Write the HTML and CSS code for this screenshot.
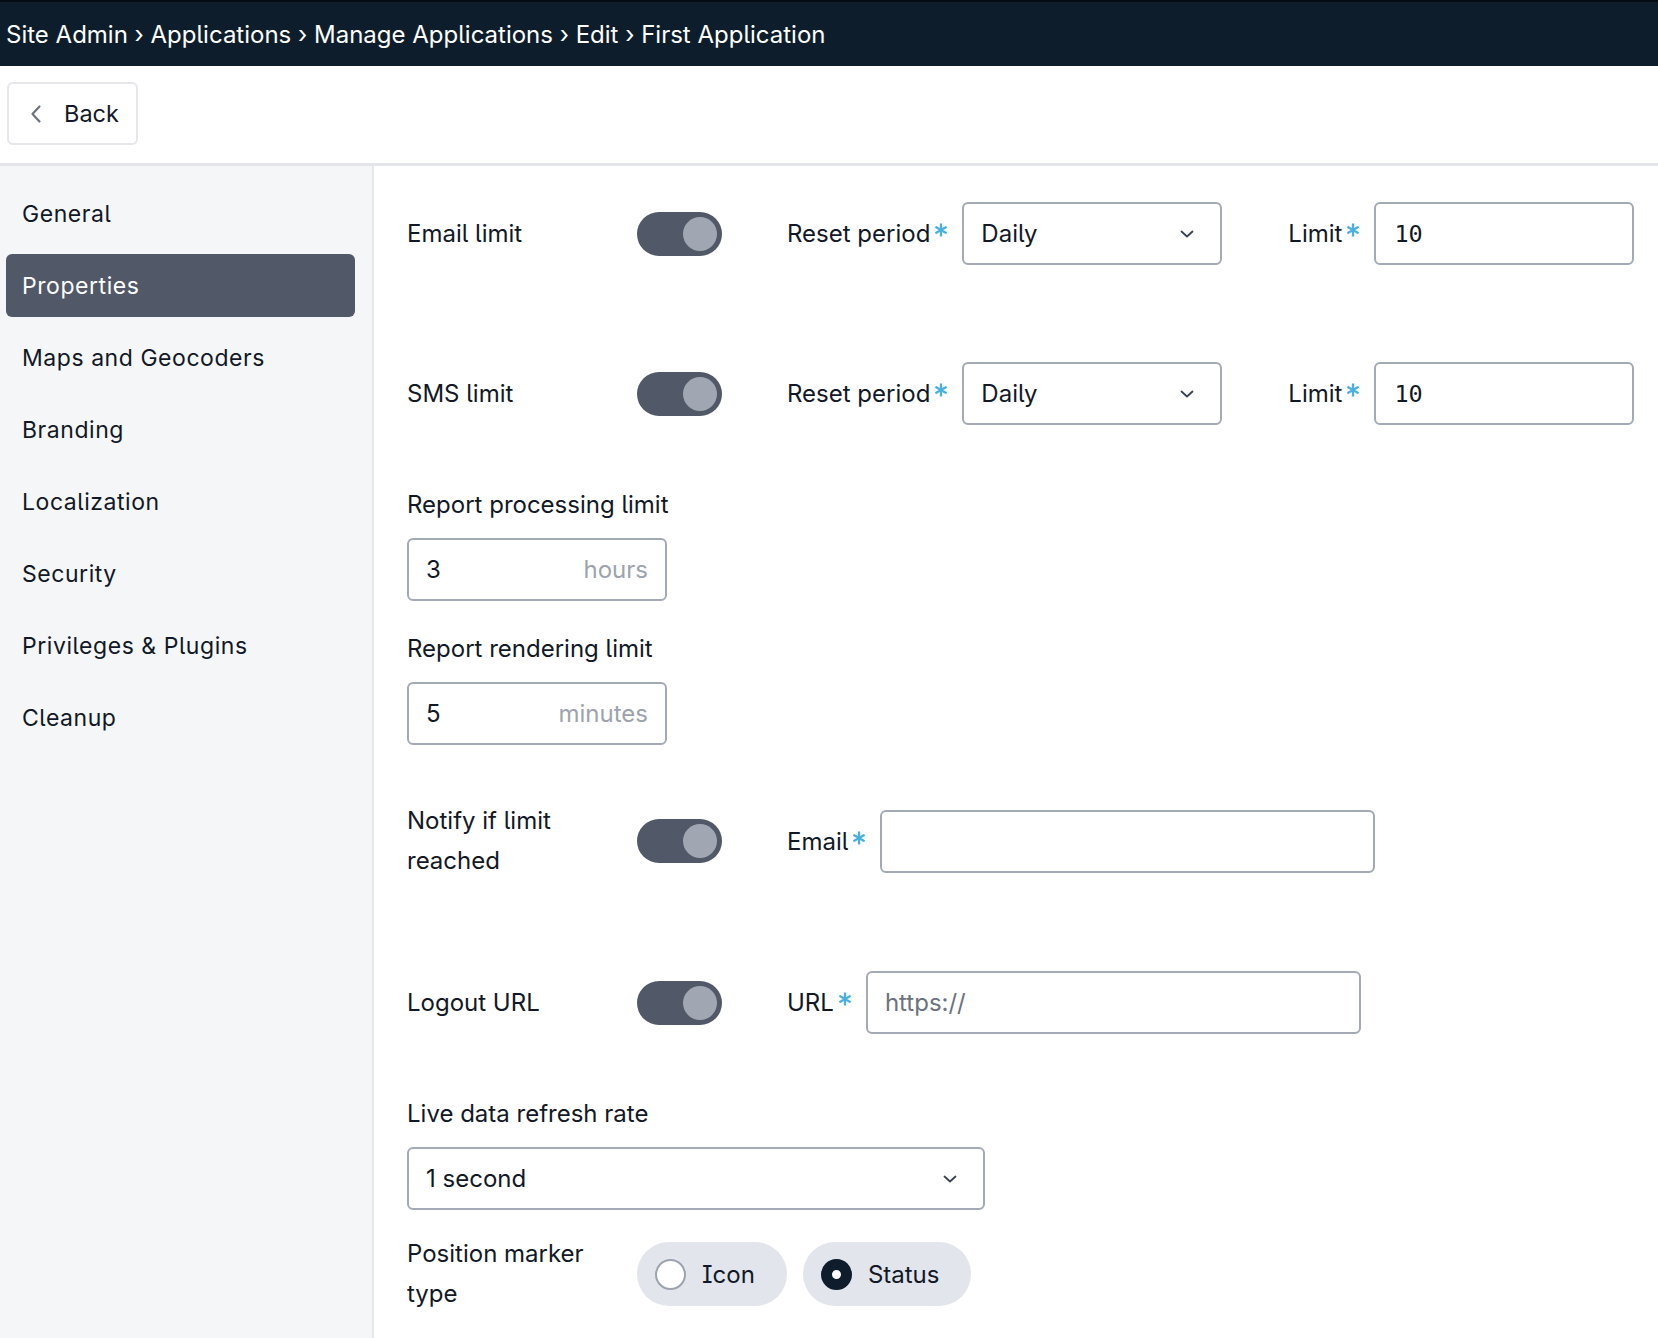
FILE: index.html
```html
<!DOCTYPE html>
<html lang="en">
<head>
<meta charset="utf-8">
<title>Edit Application</title>
<link rel="stylesheet" href="styles.css">
</head>
<body>
<header class="topbar">
  <nav class="crumbs">Site Admin › Applications › Manage Applications › Edit › First Application</nav>
</header>

<div class="toolbar">
  <button class="back-btn" type="button">
    <svg class="back-icon" viewBox="0 0 12 20" width="12" height="20" aria-hidden="true"><path d="M9.5 2.5 2.5 10l7 7.5" fill="none" stroke="currentColor" stroke-width="2.2" stroke-linecap="round" stroke-linejoin="round"/></svg>
    <span>Back</span>
  </button>
</div>

<div class="layout">
  <aside class="sidebar">
    <a class="side-item">General</a>
    <a class="side-item active">Properties</a>
    <a class="side-item">Maps and Geocoders</a>
    <a class="side-item">Branding</a>
    <a class="side-item">Localization</a>
    <a class="side-item">Security</a>
    <a class="side-item">Privileges &amp; Plugins</a>
    <a class="side-item">Cleanup</a>
  </aside>

  <main class="content">
    <div class="row row-limit">
      <div class="row-label">Email limit</div>
      <span class="toggle"><span class="knob"></span></span>
      <label class="field-label">Reset period<svg class="req" viewBox="0 0 14 14" width="14" height="14" aria-hidden="true"><path d="M7 0.5v13M1.4 3.8l11.2 6.4M1.4 10.2l11.2-6.4"/></svg></label>
      <div class="select w-sm"><span>Daily</span><svg class="chev" viewBox="0 0 14 8" width="14" height="8"><path d="M1.5 1.5 7 6.5l5.5-5" fill="none" stroke="currentColor" stroke-width="1.8" stroke-linecap="round" stroke-linejoin="round"/></svg></div>
      <label class="field-label gap-l">Limit<svg class="req" viewBox="0 0 14 14" width="14" height="14" aria-hidden="true"><path d="M7 0.5v13M1.4 3.8l11.2 6.4M1.4 10.2l11.2-6.4"/></svg></label>
      <div class="input w-sm num">10</div>
    </div>

    <div class="row row-limit second">
      <div class="row-label">SMS limit</div>
      <span class="toggle"><span class="knob"></span></span>
      <label class="field-label">Reset period<svg class="req" viewBox="0 0 14 14" width="14" height="14" aria-hidden="true"><path d="M7 0.5v13M1.4 3.8l11.2 6.4M1.4 10.2l11.2-6.4"/></svg></label>
      <div class="select w-sm"><span>Daily</span><svg class="chev" viewBox="0 0 14 8" width="14" height="8"><path d="M1.5 1.5 7 6.5l5.5-5" fill="none" stroke="currentColor" stroke-width="1.8" stroke-linecap="round" stroke-linejoin="round"/></svg></div>
      <label class="field-label gap-l">Limit<svg class="req" viewBox="0 0 14 14" width="14" height="14" aria-hidden="true"><path d="M7 0.5v13M1.4 3.8l11.2 6.4M1.4 10.2l11.2-6.4"/></svg></label>
      <div class="input w-sm num">10</div>
    </div>

    <div class="stack first-stack">
      <div class="stack-label">Report processing limit</div>
      <div class="input w-sm unit-input"><span>3</span><span class="unit">hours</span></div>
    </div>

    <div class="stack">
      <div class="stack-label">Report rendering limit</div>
      <div class="input w-sm unit-input"><span>5</span><span class="unit">minutes</span></div>
    </div>

    <div class="row row-notify">
      <div class="row-label">Notify if limit<br>reached</div>
      <span class="toggle"><span class="knob"></span></span>
      <label class="field-label">Email<svg class="req" viewBox="0 0 14 14" width="14" height="14" aria-hidden="true"><path d="M7 0.5v13M1.4 3.8l11.2 6.4M1.4 10.2l11.2-6.4"/></svg></label>
      <div class="input w-md"></div>
    </div>

    <div class="row row-logout">
      <div class="row-label">Logout URL</div>
      <span class="toggle"><span class="knob"></span></span>
      <label class="field-label">URL<svg class="req" viewBox="0 0 14 14" width="14" height="14" aria-hidden="true"><path d="M7 0.5v13M1.4 3.8l11.2 6.4M1.4 10.2l11.2-6.4"/></svg></label>
      <div class="input w-md placeholder">https://</div>
    </div>

    <div class="stack refresh">
      <div class="stack-label">Live data refresh rate</div>
      <div class="select w-lg"><span>1 second</span><svg class="chev" viewBox="0 0 14 8" width="14" height="8"><path d="M1.5 1.5 7 6.5l5.5-5" fill="none" stroke="currentColor" stroke-width="1.8" stroke-linecap="round" stroke-linejoin="round"/></svg></div>
    </div>

    <div class="row row-marker">
      <div class="row-label">Position marker<br>type</div>
      <div class="radios">
        <span class="pill"><span class="radio"></span>Icon</span>
        <span class="pill"><span class="radio checked"></span>Status</span>
      </div>
    </div>
  </main>
</div>
</body>
</html>
```

FILE: styles.css
```css
* { box-sizing: border-box; }

html, body {
  margin: 0;
  height: 100%;
}

body {
  font-family: Inter, "Noto Sans", sans-serif;
  font-feature-settings: "cv05", "cv08";
  font-size: 24px;
  color: #111827;
  background: #ffffff;
  display: flex;
  flex-direction: column;
  overflow: hidden;
}

/* top breadcrumb bar */
.topbar {
  height: 66px;
  flex: none;
  background: #0e1d2c;
  border-top: 2px solid #050b12;
  display: flex;
  align-items: center;
  padding-left: 6px;
}

.crumbs {
  color: #ffffff;
  font-size: 24px;
}

/* toolbar with back button */
.toolbar {
  flex: none;
  height: 100px;
  padding: 16px 0 0 7px;
  border-bottom: 3px solid #e3e5ea;
}

.back-btn {
  height: 63px;
  width: 131px;
  border: 2px solid #e5e7eb;
  border-radius: 6px;
  background: #fff;
  display: flex;
  align-items: center;
  gap: 22px;
  padding: 0 0 0 21px;
  font: inherit;
  font-size: 23.5px;
  color: #111827;
}

.back-icon {
  color: #6b7280;
}

/* main two-column area */
.layout {
  flex: 1;
  display: flex;
  min-height: 0;
}

.sidebar {
  width: 374px;
  flex: none;
  background: #f5f6f8;
  border-right: 2px solid #e5e7eb;
  padding: 16px 17px 0 6px;
  display: flex;
  flex-direction: column;
  gap: 9px;
}

.side-item {
  height: 63px;
  display: flex;
  align-items: center;
  padding-left: 16px;
  border-radius: 6px;
  font-size: 23px;
  letter-spacing: 0.55px;
  color: #111827;
}

.side-item.active {
  background: #515867;
  color: #ffffff;
}

.content {
  flex: 1;
  padding: 36px 0 0 33px;
}

/* inline rows with toggles */
.row {
  display: flex;
  align-items: center;
}

.row-label {
  width: 230px;
  flex: none;
  line-height: 40px;
}

.toggle {
  width: 85px;
  height: 44px;
  flex: none;
  border-radius: 22px;
  background: #515867;
  position: relative;
  margin-right: 65px;
}

.knob {
  position: absolute;
  right: 5px;
  top: 5px;
  width: 34px;
  height: 34px;
  border-radius: 50%;
  background: #a1a7b2;
}

.field-label {
  flex: none;
  display: flex;
  align-items: center;
  margin-right: 14px;
}

.field-label.gap-l {
  margin-left: 66px;
}

/* required-field marker */
.req {
  fill: none;
  stroke: #48b0e0;
  stroke-width: 2.3;
  margin-left: 4px;
  margin-bottom: 7px;
}

.input,
.select {
  height: 63px;
  border: 2px solid #a3aab5;
  border-radius: 6px;
  display: flex;
  align-items: center;
  padding: 0 17px;
  background: #fff;
}

.select {
  justify-content: space-between;
  padding-right: 26px;
}

.chev {
  color: #374151;
}

.w-sm { width: 260px; }
.w-md { width: 495px; }
.w-lg { width: 578px; }

.num {
  font-family: "DejaVu Sans Mono", monospace;
  font-size: 23.5px;
  padding-left: 18px;
}

.placeholder {
  color: #6b7280;
}

.row-limit {
  height: 63px;
}

.row-limit.second {
  margin-top: 97px;
}

/* stacked label + field */
.stack-label {
  line-height: 40px;
  margin-bottom: 13px;
}

.first-stack {
  margin-top: 60px;
}

.stack + .stack {
  margin-top: 28px;
}

.unit-input {
  justify-content: space-between;
}

.unit {
  color: #9ca3af;
}

.row-notify {
  margin-top: 56px;
}

.row-logout {
  margin-top: 90px;
}

.refresh {
  margin-top: 60px;
}

.row-marker {
  margin-top: 24px;
}

.radios {
  display: flex;
  gap: 16px;
}

.pill {
  height: 64px;
  display: flex;
  align-items: center;
  gap: 16px;
  padding: 0 32px 0 18px;
  border-radius: 32px;
  background: #e2e5eb;
}

.radio {
  width: 31px;
  height: 31px;
  border-radius: 50%;
  border: 2px solid #9ca3af;
  background: #fff;
  flex: none;
}

.radio.checked {
  border: 11px solid #0f1c2b;
  background: #ffffff;
}
```
